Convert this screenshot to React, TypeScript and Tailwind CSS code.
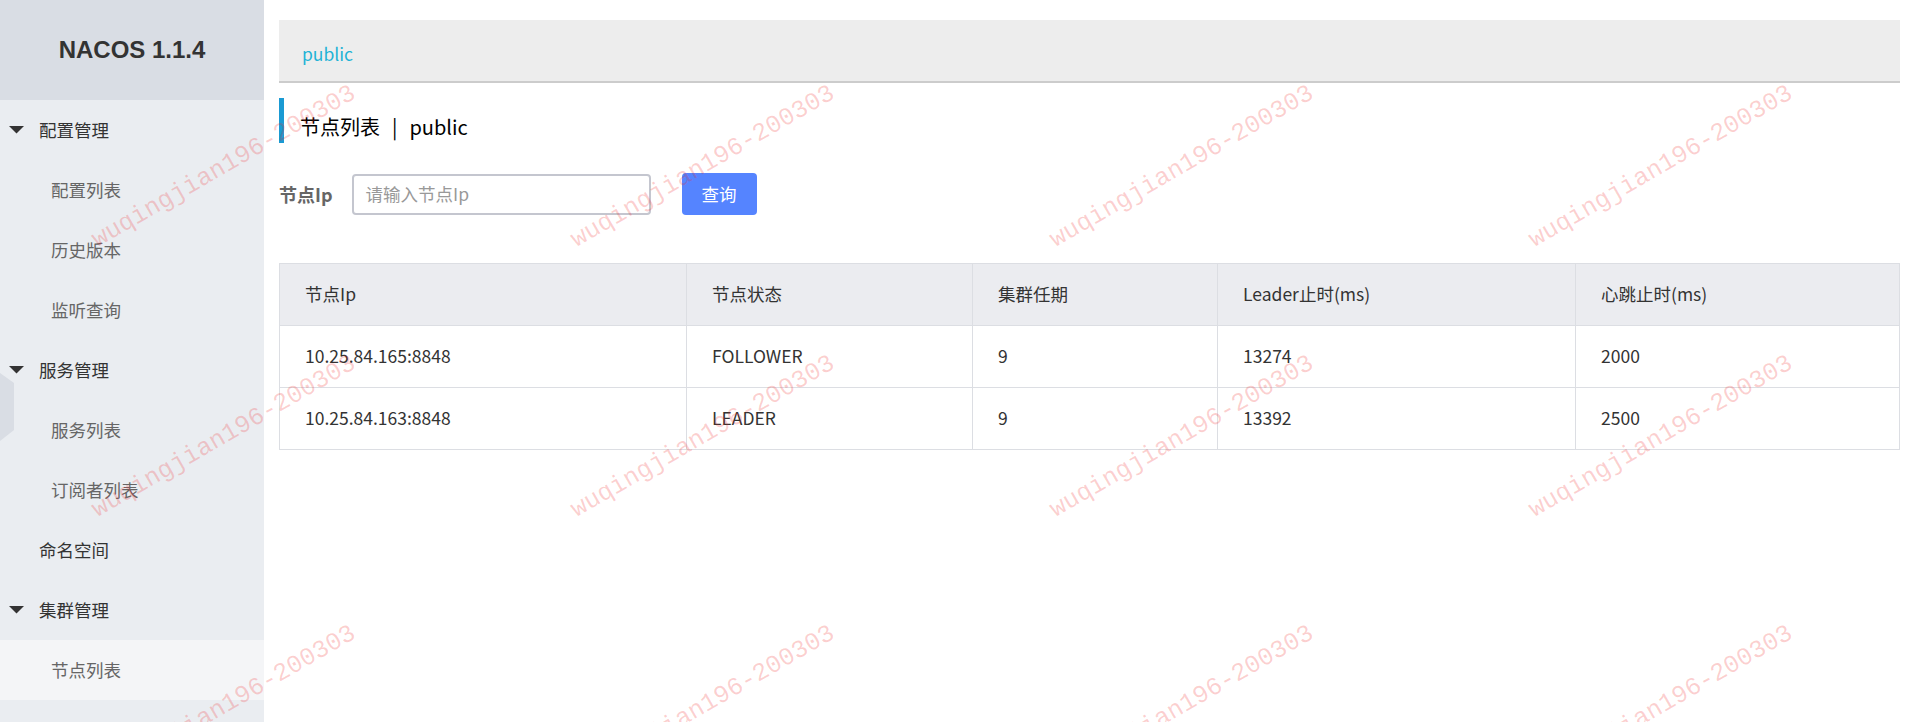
import React from 'react';

type MenuItem = { label: string; kind: 'group' | 'top' | 'sub'; active?: boolean };

const menu: MenuItem[] = [
  { label: '配置管理', kind: 'group' },
  { label: '配置列表', kind: 'sub' },
  { label: '历史版本', kind: 'sub' },
  { label: '监听查询', kind: 'sub' },
  { label: '服务管理', kind: 'group' },
  { label: '服务列表', kind: 'sub' },
  { label: '订阅者列表', kind: 'sub' },
  { label: '命名空间', kind: 'top' },
  { label: '集群管理', kind: 'group' },
  { label: '节点列表', kind: 'sub', active: true },
];

const columns = [
  { title: '节点Ip', width: 'w-[407px]' },
  { title: '节点状态', width: 'w-[286px]' },
  { title: '集群任期', width: 'w-[245px]' },
  { title: 'Leader止时(ms)', width: 'w-[358px]' },
  { title: '心跳止时(ms)', width: 'w-[324px]' },
];

const rows = [
  ['10.25.84.165:8848', 'FOLLOWER', '9', '13274', '2000'],
  ['10.25.84.163:8848', 'LEADER', '9', '13392', '2500'],
];

function Caret() {
  return (
    <svg className="w-[15px] h-[8px] shrink-0" viewBox="0 0 15 8" fill="none">
      <path d="M0 0H15L7.5 7.5Z" fill="#333" />
    </svg>
  );
}

function Sidebar() {
  return (
    <div className="relative w-[264px] shrink-0 h-full bg-[#eaedf1] flex flex-col">
      <div className="h-[100px] bg-[#d9dde4] flex items-center justify-center">
        <span className="font-['Liberation_Sans',sans-serif] font-bold text-[24px] text-[#333]">NACOS 1.1.4</span>
      </div>
      {menu.map((m) => (
        <div
          key={m.label}
          className={
            'h-[60px] flex items-center text-[17.5px] ' +
            (m.active ? 'bg-[#f4f5f7] ' : '') +
            (m.kind === 'group' ? 'pl-[9px] text-[#333]' : m.kind === 'top' ? 'pl-[39px] text-[#333]' : 'pl-[51px] text-[#666]')
          }
        >
          {m.kind === 'group' && <Caret />}
          <span className={m.kind === 'group' ? 'ml-[15px]' : ''}>{m.label}</span>
        </div>
      ))}

      {/* collapse handle */}
      <svg className="absolute left-0 top-[373px] w-[14px] h-[68px]" viewBox="0 0 14 68" fill="none">
        <path d="M0 0L14 10V57L0 68Z" fill="#d9dde4" />
      </svg>
    </div>
  );
}

function Watermarks() {
  const cells = Array.from({ length: 12 });
  return (
    <div className="absolute left-[-15px] top-[32px] grid grid-cols-[repeat(4,479px)] grid-rows-[repeat(3,270px)] pointer-events-none z-10">
      {cells.map((_, i) => (
        <div key={i} className="flex items-center justify-center">
          <span className="whitespace-nowrap rotate-[-30deg] font-['Liberation_Mono',monospace] text-[25px] text-[rgba(240,40,40,0.22)]">
            wuqingjian196-200303
          </span>
        </div>
      ))}
    </div>
  );
}

export default function App() {
  return (
    <div className="relative w-full h-[722px] flex overflow-hidden bg-white font-['Noto_Sans_CJK_SC',sans-serif]">
      <Sidebar />

      <div className="flex-1 pt-[20px] pl-[15px] pr-[13px] flex flex-col">
        <div className="h-[63px] bg-[#ededed] border-b-2 border-[#cccccc] flex items-center pl-[23px] pt-[7px]">
          <span className="text-[17.5px] text-[#1fb3d6]">public</span>
        </div>

        <div className="mt-[15px] h-[45px] border-l-[5px] border-[#1a9ad3] pl-[16px] pt-[13px] flex items-center text-[20px] text-black">
          <span>节点列表</span>
          <span className="mx-[12px]">|</span>
          <span>public</span>
        </div>

        <div className="mt-[30px] flex items-center">
          <span className="font-bold text-[18px] text-[#666]">节点Ip</span>
          <div className="ml-[19px] w-[299px] h-[41px] border-2 border-[#c4c6cf] rounded-[4px] flex items-center pl-[12px]">
            <span className="text-[17.5px] text-[#999]">请输入节点Ip</span>
          </div>
          <button className="ml-[31px] w-[75px] h-[42px] rounded-[4px] bg-[#5584ff] text-white text-[17.5px]">查询</button>
        </div>

        <table className="mt-[48px] w-[1620px] table-fixed border-collapse border border-[#dcdee3] text-[17.5px] text-[#333]">
          <colgroup>
            {columns.map((c) => (
              <col key={c.title} className={c.width} />
            ))}
          </colgroup>
          <thead>
            <tr className="bg-[#ebecf0]">
              {columns.map((c) => (
                <th key={c.title} className="h-[62px] px-[25px] text-left font-normal border border-[#dcdee3]">
                  {c.title}
                </th>
              ))}
            </tr>
          </thead>
          <tbody>
            {rows.map((r) => (
              <tr key={r[0]}>
                {r.map((v, i) => (
                  <td key={i} className="h-[62px] px-[25px] border border-[#dcdee3]">
                    {v}
                  </td>
                ))}
              </tr>
            ))}
          </tbody>
        </table>
      </div>

      <Watermarks />
    </div>
  );
}
